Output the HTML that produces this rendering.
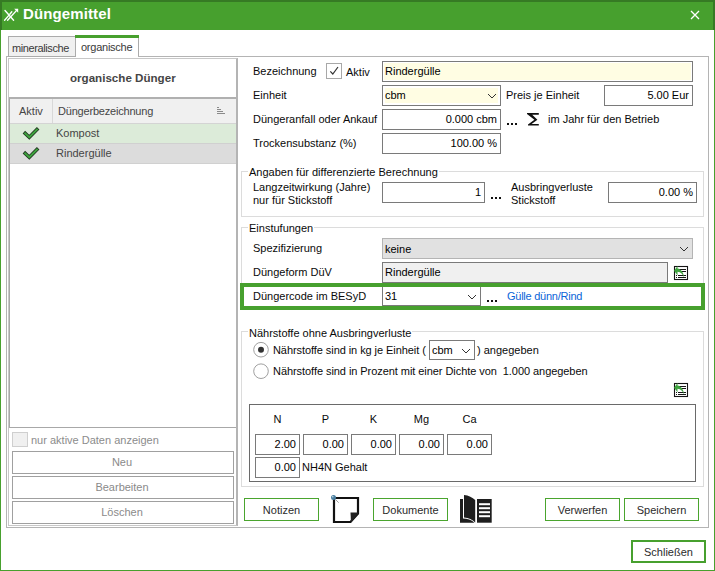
<!DOCTYPE html>
<html><head><meta charset="utf-8">
<style>
html,body{margin:0;padding:0;}
body{width:715px;height:571px;position:relative;overflow:hidden;background:#fff;font-family:"Liberation Sans",sans-serif;font-size:11px;color:#0a0a0a;}
.a{position:absolute;box-sizing:border-box;}
.t{position:absolute;white-space:nowrap;line-height:13px;font-size:11px;}
.tb{position:absolute;box-sizing:border-box;border:1px solid #7a7a7a;background:#fff;}
.btn{position:absolute;box-sizing:border-box;border:1px solid #4aa52e;background:#fff;text-align:center;line-height:23px;color:#2b2b2b;}
.lbtn{position:absolute;box-sizing:border-box;border:1px solid #a0a0a0;background:#fff;text-align:center;line-height:20px;color:#8a8a8a;padding-right:2px;}
.gb{position:absolute;box-sizing:border-box;border:1px solid #dcdcdc;}
.r{text-align:right;}
</style></head><body>

<!-- window frame -->
<div class="a" style="left:0;top:0;width:715px;height:571px;border:1px solid #47a02e;"></div>
<!-- title bar -->
<div class="a" style="left:0;top:0;width:715px;height:30px;background:#47a02e;border-top:2px solid #367a24;border-left:2px solid #367a24;border-right:2px solid #367a24;"></div>
<svg class="a" style="left:0;top:0" width="24" height="30" viewBox="0 0 24 30">
 <g stroke="#fff" stroke-width="1.4" fill="none" stroke-linecap="round">
  <line x1="5" y1="10.5" x2="13.6" y2="20.2"/>
  <line x1="4.6" y1="20.2" x2="8.6" y2="15.6"/>
  <line x1="9.8" y1="14.2" x2="11.8" y2="11.8"/>
  <line x1="7.6" y1="20.2" x2="16.4" y2="10.6"/>
 </g>
 <path d="M14.2 8.8 L18.2 8.8 L18.2 12.8 Z" fill="#fff"/>
</svg>
<div class="t" style="left:23px;top:5px;font-size:15px;font-weight:bold;color:#fff;line-height:17px;letter-spacing:0.12px;">Düngemittel</div>
<svg class="a" style="left:690px;top:10px" width="10" height="10" viewBox="0 0 10 10">
 <path d="M1 1 L9 9 M9 1 L1 9" stroke="#fff" stroke-width="1.3"/>
</svg>

<!-- tabs -->
<div class="a" style="left:8px;top:36px;width:68px;height:21px;background:#f0f0f0;border:1px solid #ababab;"></div>
<div class="t" style="left:12px;top:42px;color:#3a3a3a;letter-spacing:-0.4px;">mineralische</div>
<div class="a" style="left:75px;top:35px;width:64px;height:22px;background:#fff;border-left:1px solid #ababab;border-right:1px solid #ababab;"></div>
<div class="a" style="left:75px;top:35px;width:64px;height:3px;background:#47a02e;"></div>
<div class="t" style="left:81px;top:41px;color:#3a3a3a;letter-spacing:-0.25px;">organische</div>

<!-- outer tab panel -->
<div class="a" style="left:6px;top:56px;width:703px;height:472px;border:1px solid #b4b4b4;border-top:none;"></div>
<div class="a" style="left:6px;top:56px;width:2px;height:1px;background:#b4b4b4;"></div>
<div class="a" style="left:138px;top:56px;width:571px;height:1px;background:#b4b4b4;"></div>

<!-- left inner panel -->
<div class="a" style="left:8px;top:58px;width:230px;height:468px;border:1px solid #c8c8c8;border-right:2px solid #b4b4b4;"></div>
<div class="t" style="left:70px;top:71px;font-weight:bold;color:#454545;font-size:11.6px;">organische Dünger</div>
<!-- grid -->
<div class="a" style="left:9px;top:97px;width:227px;height:331px;border-left:1px solid #a8a8a8;border-top:2px solid #b0b0b0;border-bottom:1px solid #a8a8a8;"></div>
<div class="a" style="left:10px;top:99px;width:226px;height:24px;background:#f0f0f0;"></div>
<div class="a" style="left:52px;top:99px;width:1px;height:24px;background:#d8d8d8;"></div>
<div class="a" style="left:10px;top:123px;width:226px;height:1px;background:#d4d4d4;"></div>
<div class="t" style="left:19px;top:105px;color:#454545;">Aktiv</div>
<div class="t" style="left:58px;top:105px;color:#454545;letter-spacing:-0.2px;">Düngerbezeichnung</div>
<svg class="a" style="left:216px;top:106px" width="10" height="9" viewBox="0 0 10 9">
 <g fill="#8a8a8a"><rect x="1" y="1" width="2" height="1"/><rect x="1" y="3" width="4" height="1"/><rect x="1" y="5" width="6" height="1"/><rect x="1" y="7" width="8" height="1"/></g>
</svg>
<div class="a" style="left:10px;top:124px;width:226px;height:19px;background:#dcebd9;"></div>
<div class="a" style="left:10px;top:143px;width:226px;height:1px;background:#d0d0d0;"></div>
<div class="a" style="left:10px;top:144px;width:226px;height:19px;background:#dcdcdc;"></div>
<div class="a" style="left:10px;top:163px;width:226px;height:1px;background:#d0d0d0;"></div>
<svg class="a" style="left:20px;top:124px" width="22" height="40" viewBox="0 0 22 40">
 <path d="M5.2 9.4 L9.3 13.2 L16.9 5.5" stroke="#233a23" stroke-width="3.6" fill="none" stroke-linejoin="miter" stroke-linecap="square"/>
 <path d="M5.2 9.4 L9.3 13.2 L16.9 5.5" stroke="#3ea53e" stroke-width="1.9" fill="none" stroke-linejoin="miter" stroke-linecap="square"/>
 <path d="M5.2 29.4 L9.3 33.2 L16.9 25.5" stroke="#233a23" stroke-width="3.6" fill="none" stroke-linejoin="miter" stroke-linecap="square"/>
 <path d="M5.2 29.4 L9.3 33.2 L16.9 25.5" stroke="#3ea53e" stroke-width="1.9" fill="none" stroke-linejoin="miter" stroke-linecap="square"/>
</svg>
<div class="t" style="left:56px;top:127px;color:#454545;">Kompost</div>
<div class="t" style="left:56px;top:147px;color:#454545;">Rindergülle</div>

<!-- left bottom -->
<div class="a" style="left:12px;top:432px;width:16px;height:15px;background:#f0f0f0;border:1px solid #cfcfcf;"></div>
<div class="t" style="left:31px;top:434px;color:#8c8c8c;">nur aktive Daten anzeigen</div>
<div class="lbtn" style="left:12px;top:451px;width:222px;height:23px;">Neu</div>
<div class="lbtn" style="left:12px;top:476px;width:222px;height:23px;">Bearbeiten</div>
<div class="lbtn" style="left:12px;top:501px;width:222px;height:23px;">Löschen</div>

<!-- RIGHT SIDE -->

<!-- top fields -->
<div class="t" style="left:253px;top:65px;">Bezeichnung</div>
<div class="a" style="left:326px;top:63px;width:16px;height:16px;border:1px solid #a8a8a8;"></div>
<svg class="a" style="left:326px;top:63px" width="16" height="16" viewBox="0 0 16 16"><path d="M4.3 8.3 L6.8 11 L12 4" stroke="#333" stroke-width="1.2" fill="none"/></svg>
<div class="t" style="left:346px;top:66px;">Aktiv</div>
<div class="tb" style="left:382px;top:61px;width:311px;height:21px;"><div class="a" style="left:1px;top:1px;right:1px;bottom:1px;background:#fffde3;"></div></div>
<div class="t" style="left:385px;top:65px;color:#000;">Rindergülle</div>

<div class="t" style="left:253px;top:89px;">Einheit</div>
<div class="tb" style="left:382px;top:85px;width:119px;height:21px;"><div class="a" style="left:2px;top:2px;right:2px;bottom:2px;background:#fffde3;"></div></div>
<div class="t" style="left:385px;top:89px;color:#000;">cbm</div>
<svg class="a" style="left:488px;top:94px" width="8" height="4" viewBox="0 0 8 4" shape-rendering="crispEdges"><g fill="#333"><rect x="0" y="0" width="1" height="1"/><rect x="7" y="0" width="1" height="1"/><rect x="1" y="1" width="1" height="1"/><rect x="6" y="1" width="1" height="1"/><rect x="2" y="2" width="1" height="1"/><rect x="5" y="2" width="1" height="1"/><rect x="3" y="3" width="1" height="1"/><rect x="4" y="3" width="1" height="1"/></g></svg>
<div class="t" style="left:506px;top:89px;">Preis je Einheit</div>
<div class="tb" style="left:604px;top:85px;width:89px;height:21px;"></div>
<div class="t r" style="left:604px;top:89px;width:85px;color:#000;">5.00 Eur</div>

<div class="t" style="left:253px;top:113px;">Düngeranfall oder Ankauf</div>
<div class="tb" style="left:382px;top:109px;width:119px;height:21px;"></div>
<div class="t r" style="left:382px;top:113px;width:115px;color:#000;">0.000 cbm</div>
<div class="a" style="left:507px;top:123px;width:2px;height:2px;background:#111;"></div>
<div class="a" style="left:511px;top:123px;width:2px;height:2px;background:#111;"></div>
<div class="a" style="left:515px;top:123px;width:2px;height:2px;background:#111;"></div>
<svg class="a" style="left:527px;top:113px" width="13" height="13" viewBox="0 0 13 13"><path d="M0 0 H11.8 V1.8 H5.2 L10.4 6.8 L4.6 11 H11.8 V12.6 H1 V11.6 L7.4 6.8 L0 1 Z" fill="#111"/></svg>
<div class="t" style="left:548px;top:113px;">im Jahr für den Betrieb</div>

<div class="t" style="left:253px;top:137px;">Trockensubstanz (%)</div>
<div class="tb" style="left:382px;top:133px;width:119px;height:21px;"></div>
<div class="t r" style="left:382px;top:137px;width:115px;color:#000;">100.00 %</div>

<!-- Angaben groupbox -->
<div class="gb" style="left:241px;top:171px;width:463px;height:46px;"></div>
<div class="t" style="left:248px;top:166px;background:#fff;padding:0 1px;">Angaben für differenzierte Berechnung</div>
<div class="t" style="left:253px;top:181px;">Langzeitwirkung (Jahre)</div>
<div class="t" style="left:253px;top:194px;">nur für Stickstoff</div>
<div class="tb" style="left:382px;top:182px;width:103px;height:21px;"></div>
<div class="t r" style="left:382px;top:186px;width:99px;color:#000;">1</div>
<div class="a" style="left:491px;top:197px;width:2px;height:2px;background:#111;"></div>
<div class="a" style="left:495px;top:197px;width:2px;height:2px;background:#111;"></div>
<div class="a" style="left:499px;top:197px;width:2px;height:2px;background:#111;"></div>
<div class="t" style="left:511px;top:181px;">Ausbringverluste</div>
<div class="t" style="left:511px;top:194px;">Stickstoff</div>
<div class="tb" style="left:608px;top:182px;width:89px;height:21px;"></div>
<div class="t r" style="left:608px;top:186px;width:85px;color:#000;">0.00 %</div>

<!-- Einstufungen -->
<div class="gb" style="left:241px;top:227px;width:463px;height:80px;"></div>
<div class="t" style="left:248px;top:222px;background:#fff;padding:0 1px;">Einstufungen</div>
<div class="t" style="left:253px;top:242px;">Spezifizierung</div>
<div class="a" style="left:382px;top:238px;width:311px;height:21px;background:#e1e1e1;border:1px solid #b4b4b4;"></div>
<div class="t" style="left:385px;top:243px;color:#000;">keine</div>
<svg class="a" style="left:680px;top:247px" width="8" height="4" viewBox="0 0 8 4" shape-rendering="crispEdges"><g fill="#333"><rect x="0" y="0" width="1" height="1"/><rect x="7" y="0" width="1" height="1"/><rect x="1" y="1" width="1" height="1"/><rect x="6" y="1" width="1" height="1"/><rect x="2" y="2" width="1" height="1"/><rect x="5" y="2" width="1" height="1"/><rect x="3" y="3" width="1" height="1"/><rect x="4" y="3" width="1" height="1"/></g></svg>
<div class="t" style="left:253px;top:266px;">Düngeform DüV</div>
<div class="tb" style="left:382px;top:262px;width:286px;height:21px;background:#f0f0f0;"></div>
<div class="t" style="left:385px;top:266px;color:#000;">Rindergülle</div>
<svg class="a" style="left:673px;top:265px" width="16" height="16" viewBox="0 0 16 16">
 <rect x="1.5" y="1.5" width="13" height="13" fill="#fff" stroke="#151515" stroke-width="1.1"/>
 <g fill="#151515"><rect x="6" y="4" width="7" height="1"/><rect x="6" y="6" width="7" height="1"/><rect x="5" y="10" width="8" height="1"/><rect x="5" y="12" width="8" height="1"/><rect x="3" y="10" width="1" height="1"/><rect x="3" y="12" width="1" height="1"/></g>
 <path d="M1 5.8 L4.6 1 L4.5 3.4 C8.2 4 10.6 7.4 11.2 12.6 C9.8 9.4 7.8 7 4.5 6.8 L4.5 10.2 Z" fill="#3fa33f"/>
</svg>
<div class="tb" style="left:382px;top:286px;width:99px;height:20px;"></div>
<div class="a" style="left:240px;top:283px;width:465px;height:27px;border:4px solid #47a02e;"></div>
<div class="t" style="left:253px;top:290px;">Düngercode im BESyD</div>
<div class="t" style="left:385px;top:290px;color:#000;">31</div>
<svg class="a" style="left:468px;top:295px" width="8" height="4" viewBox="0 0 8 4" shape-rendering="crispEdges"><g fill="#333"><rect x="0" y="0" width="1" height="1"/><rect x="7" y="0" width="1" height="1"/><rect x="1" y="1" width="1" height="1"/><rect x="6" y="1" width="1" height="1"/><rect x="2" y="2" width="1" height="1"/><rect x="5" y="2" width="1" height="1"/><rect x="3" y="3" width="1" height="1"/><rect x="4" y="3" width="1" height="1"/></g></svg>
<div class="a" style="left:487px;top:300px;width:2px;height:2px;background:#111;"></div>
<div class="a" style="left:491px;top:300px;width:2px;height:2px;background:#111;"></div>
<div class="a" style="left:495px;top:300px;width:2px;height:2px;background:#111;"></div>
<div class="t" style="left:507px;top:290px;color:#0a64d8;letter-spacing:-0.25px;">Gülle dünn/Rind</div>

<!-- Nährstoffe -->
<div class="gb" style="left:241px;top:331px;width:463px;height:156px;"></div>
<div class="t" style="left:248px;top:327px;background:#fff;padding:0 1px;">Nährstoffe ohne Ausbringverluste</div>
<svg class="a" style="left:252px;top:341px" width="18" height="40" viewBox="0 0 18 40">
 <circle cx="9" cy="8.7" r="7.3" fill="#fff" stroke="#a0a0a0" stroke-width="1"/>
 <circle cx="9" cy="8.7" r="3" fill="#333"/>
 <circle cx="9" cy="30.2" r="7.3" fill="#fff" stroke="#a0a0a0" stroke-width="1"/>
</svg>
<div class="t" style="left:273px;top:344px;letter-spacing:-0.07px;">Nährstoffe sind in kg je Einheit (</div>
<div class="tb" style="left:429px;top:340px;width:46px;height:20px;"></div>
<div class="t" style="left:432px;top:344px;color:#000;">cbm</div>
<svg class="a" style="left:462px;top:349px" width="8" height="4" viewBox="0 0 8 4" shape-rendering="crispEdges"><g fill="#333"><rect x="0" y="0" width="1" height="1"/><rect x="7" y="0" width="1" height="1"/><rect x="1" y="1" width="1" height="1"/><rect x="6" y="1" width="1" height="1"/><rect x="2" y="2" width="1" height="1"/><rect x="5" y="2" width="1" height="1"/><rect x="3" y="3" width="1" height="1"/><rect x="4" y="3" width="1" height="1"/></g></svg>
<div class="t" style="left:477px;top:344px;">) angegeben</div>
<div class="t" style="left:273px;top:365px;letter-spacing:-0.06px;">Nährstoffe sind in Prozent mit einer Dichte von&nbsp; 1.000 angegeben</div>
<svg class="a" style="left:673px;top:382px" width="16" height="16" viewBox="0 0 16 16">
 <rect x="1.5" y="1.5" width="13" height="13" fill="#fff" stroke="#151515" stroke-width="1.1"/>
 <g fill="#151515"><rect x="6" y="4" width="7" height="1"/><rect x="6" y="6" width="7" height="1"/><rect x="5" y="10" width="8" height="1"/><rect x="5" y="12" width="8" height="1"/><rect x="3" y="10" width="1" height="1"/><rect x="3" y="12" width="1" height="1"/></g>
 <path d="M1 5.8 L4.6 1 L4.5 3.4 C8.2 4 10.6 7.4 11.2 12.6 C9.8 9.4 7.8 7 4.5 6.8 L4.5 10.2 Z" fill="#3fa33f"/>
</svg>
<div class="a" style="left:249px;top:404px;width:447px;height:78px;border:1px solid #6a6a6a;"></div>
<div class="t" style="left:255px;top:413px;width:45px;text-align:center;">N</div>
<div class="t" style="left:303px;top:413px;width:45px;text-align:center;">P</div>
<div class="t" style="left:351px;top:413px;width:45px;text-align:center;">K</div>
<div class="t" style="left:399px;top:413px;width:45px;text-align:center;">Mg</div>
<div class="t" style="left:447px;top:413px;width:45px;text-align:center;">Ca</div>
<div class="tb" style="left:255px;top:434px;width:45px;height:21px;"></div>
<div class="tb" style="left:303px;top:434px;width:45px;height:21px;"></div>
<div class="tb" style="left:351px;top:434px;width:45px;height:21px;"></div>
<div class="tb" style="left:399px;top:434px;width:45px;height:21px;"></div>
<div class="tb" style="left:447px;top:434px;width:45px;height:21px;"></div>
<div class="t r" style="left:255px;top:438px;width:41px;color:#000;">2.00</div>
<div class="t r" style="left:303px;top:438px;width:41px;color:#000;">0.00</div>
<div class="t r" style="left:351px;top:438px;width:41px;color:#000;">0.00</div>
<div class="t r" style="left:399px;top:438px;width:41px;color:#000;">0.00</div>
<div class="t r" style="left:447px;top:438px;width:41px;color:#000;">0.00</div>
<div class="tb" style="left:255px;top:457px;width:45px;height:21px;"></div>
<div class="t r" style="left:255px;top:461px;width:41px;color:#000;">0.00</div>
<div class="t" style="left:302px;top:461px;">NH4N Gehalt</div>

<!-- bottom buttons -->
<div class="btn" style="left:244px;top:498px;width:75px;height:23px;">Notizen</div>
<svg class="a" style="left:330px;top:494px" width="32" height="32" viewBox="0 0 32 32">
 <path d="M4 4 H28 V19.5 L20.5 28 H4 Z" fill="#fff" stroke="#111" stroke-width="2.2"/>
 <path d="M20.5 18.6 H29 L21 28.5 Z" fill="#222"/>
 <line x1="5.5" y1="5.5" x2="8.7" y2="8.7" stroke="#888" stroke-width="0.8"/>
 <circle cx="3.5" cy="3.5" r="2.5" fill="#4a7fa0"/>
 <circle cx="2.8" cy="2.8" r="0.8" fill="#cfe0ea"/>
</svg>
<div class="btn" style="left:373px;top:498px;width:75px;height:23px;">Dokumente</div>
<svg class="a" style="left:458px;top:493px" width="36" height="32" viewBox="0 0 36 32">
 <path d="M2 6 H5 V25.6 C9 25.6 13.5 26.6 16.5 29.7 H2 Z" fill="#1e1e1e"/>
 <path d="M6 2 C10.5 2.4 14.5 4.5 17.2 7 V29.6 C14.5 26.8 10.5 25 6 24.6 Z" fill="#1e1e1e"/>
 <rect x="19" y="6" width="14.7" height="23.7" fill="#1e1e1e"/>
 <g fill="#fff"><rect x="21" y="10.2" width="11" height="2"/><rect x="21" y="14.2" width="11" height="2"/><rect x="21" y="18.2" width="11" height="2"/><rect x="21" y="22.2" width="11" height="2"/></g>
</svg>
<div class="btn" style="left:545px;top:498px;width:75px;height:23px;">Verwerfen</div>
<div class="btn" style="left:624px;top:498px;width:75px;height:23px;">Speichern</div>


<!-- Schließen -->
<div class="a" style="left:631px;top:540px;width:75px;height:23px;border:2px solid #47a02e;"></div>
<div class="t" style="left:631px;top:546px;width:75px;text-align:center;color:#2b2b2b;">Schließen</div>

</body></html>
